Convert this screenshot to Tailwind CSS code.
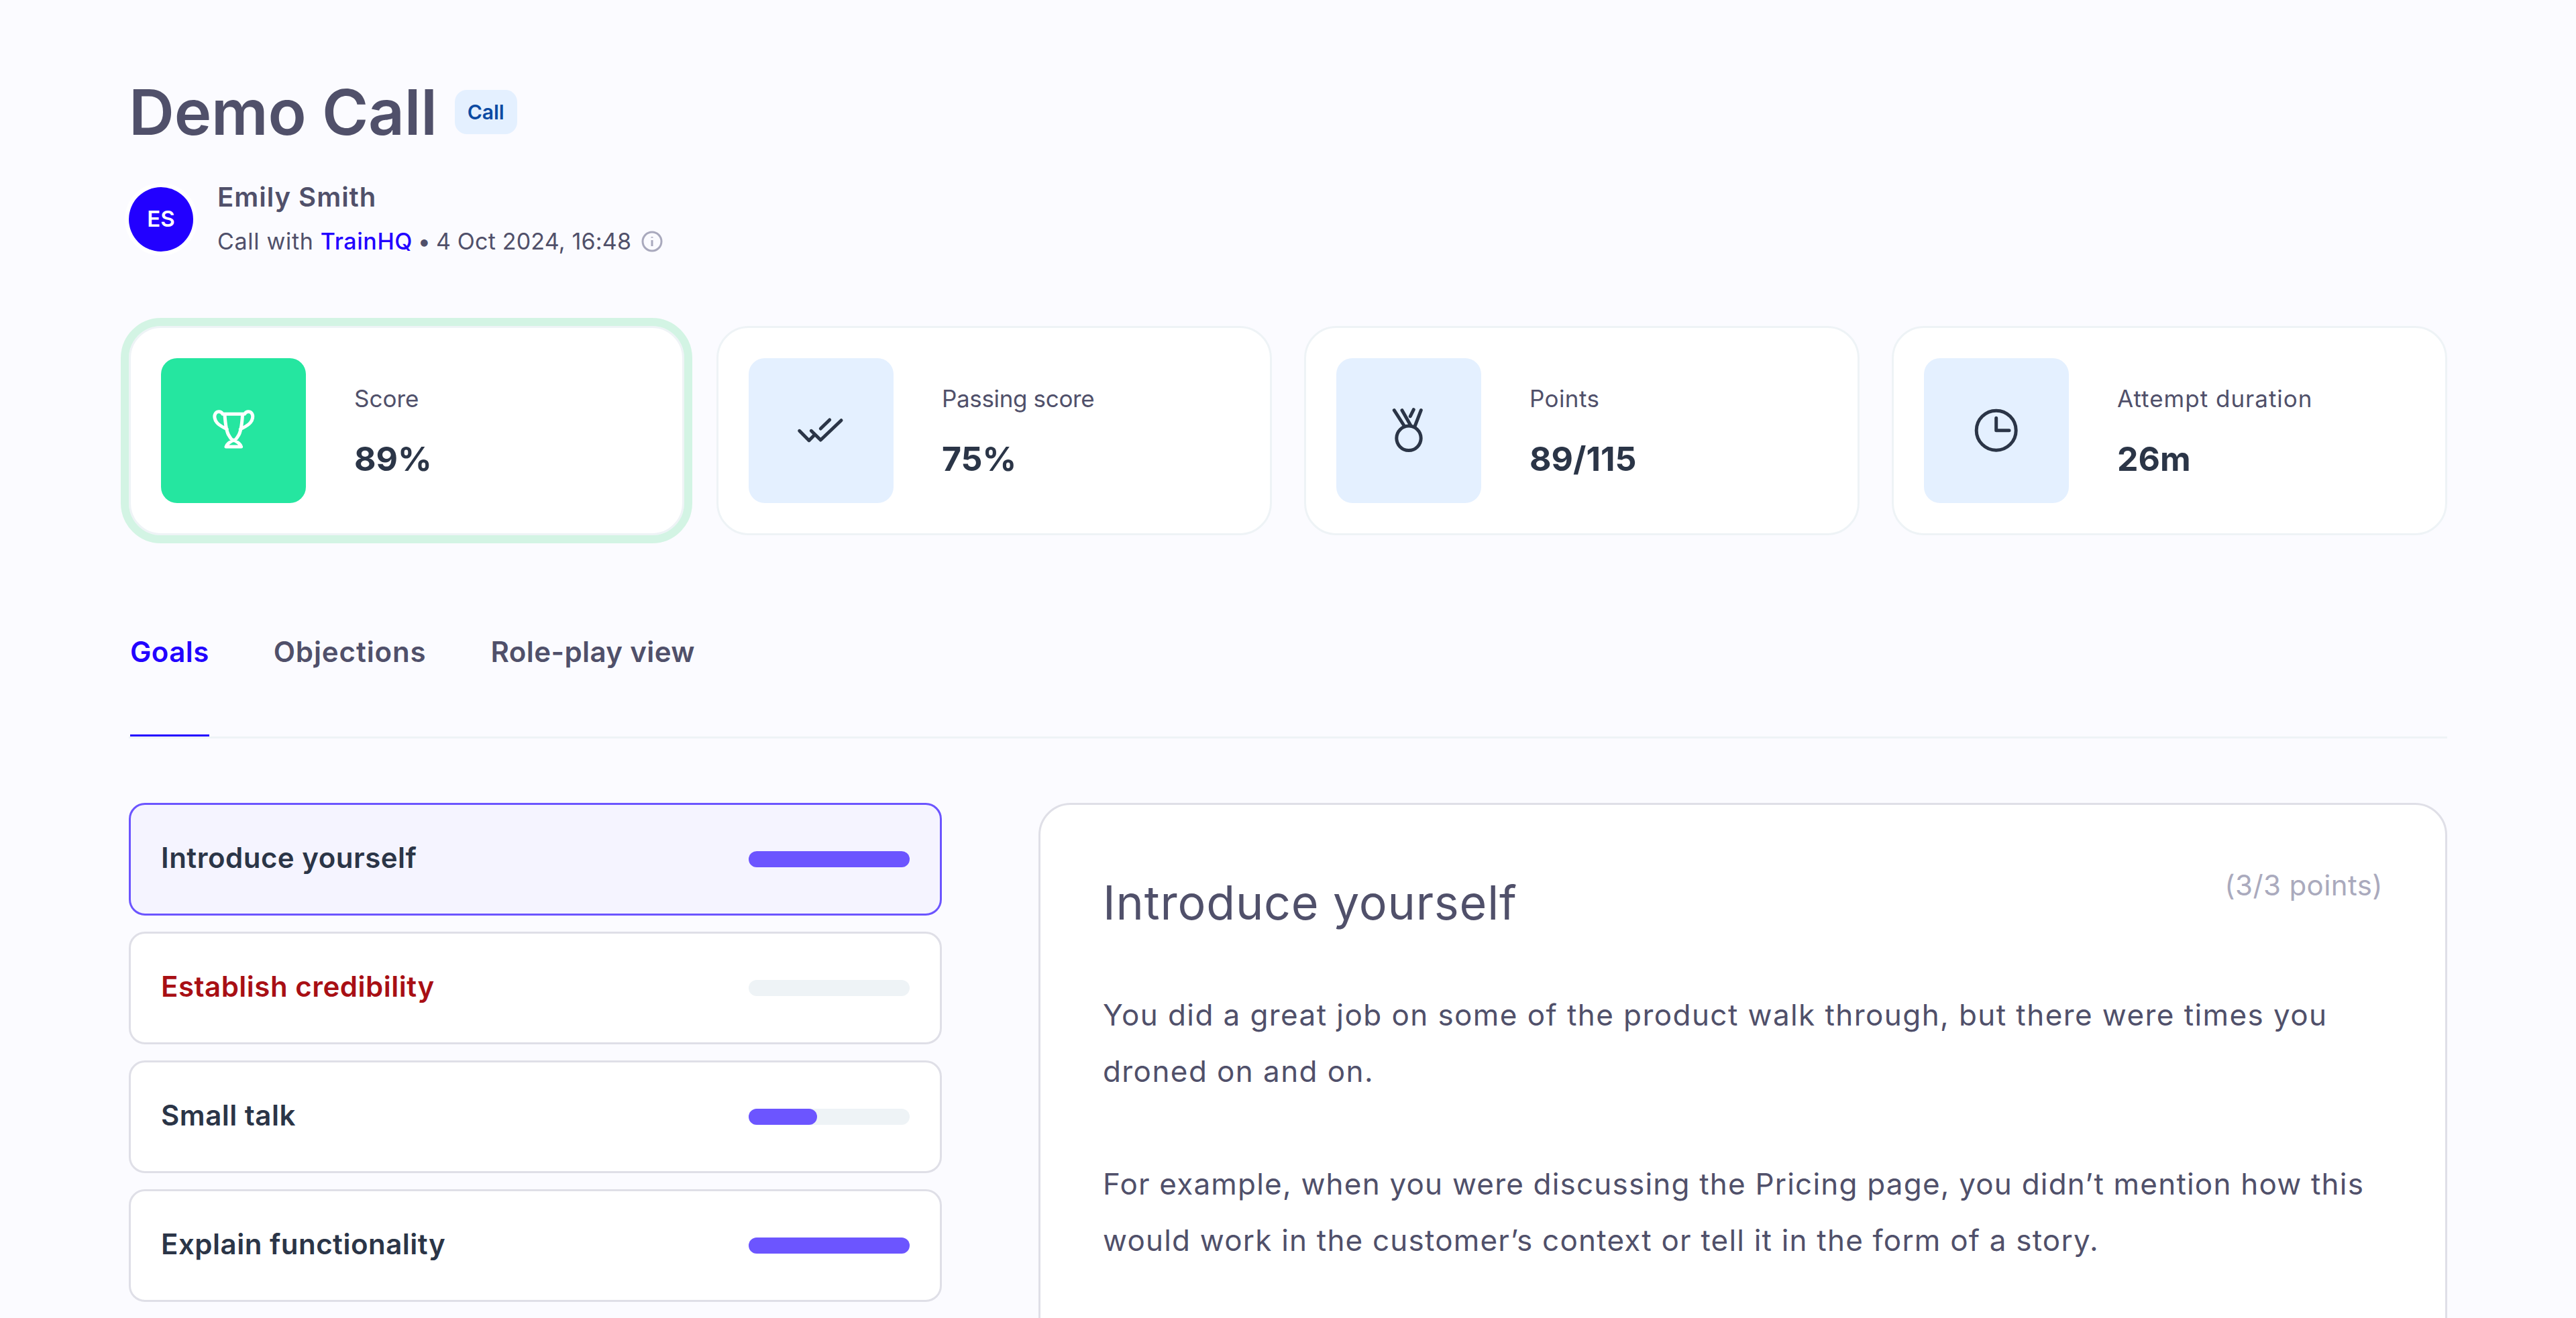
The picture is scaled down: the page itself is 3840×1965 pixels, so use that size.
<!doctype html>
<html>
<head>
<meta charset="utf-8">
<script src="https://cdn.jsdelivr.net/npm/@tailwindcss/browser@4"></script>
</head>
<body class="bg-[#fbfbff] font-['Inter',sans-serif] text-[#50506a]">
<div class="h-[1965px] overflow-hidden px-[192px]">
  <div class="flex items-center gap-[26px] pt-[113px]">
    <h1 class="text-[94px] leading-[108px] font-semibold tracking-[-0.2px]">Demo Call</h1>
    <span class="flex h-[66px] w-[93px] items-center justify-center rounded-[18px] bg-[#e4f0ff] text-[30px] font-semibold text-[#0b4aa2]">Call</span>
  </div>
  <div class="mt-[43px] flex items-center gap-[36px]">
    <div class="flex size-[96px] items-center justify-center rounded-full bg-[#2200ff] text-[33px] font-semibold text-white ring-[6px] ring-white">ES</div>
    <div>
      <p class="text-[40px] leading-[60px] font-semibold tracking-[1px]">Emily Smith</p>
      <p class="mt-[6px] flex items-center gap-[15px] text-[34px] leading-[60px] tracking-[0.2px]"><span><span class="tracking-[0.7px]">Call with </span><span class="font-medium tracking-[0.6px] text-[#2200ff]">TrainHQ</span><span class="-mx-[2px]"> • </span>4 Oct 2024, 16:48</span>
        <svg class="size-[32px]" viewBox="0 0 32 32" fill="none" stroke="#a9a9bd" stroke-width="3"><circle cx="16" cy="16" r="14"/><path d="M16 14v9M16 9v1.500"/></svg>
      </p>
    </div>
  </div>
  <div class="mt-[96px] grid grid-cols-4 gap-[48px]">
    <div class="flex h-[312px] items-center gap-[72px] rounded-[48px] border-[3px] border-[#eef3f6] bg-white pl-[45px] outline-[12px] outline-[#d3f4e4]">
      <div class="flex size-[216px] items-center justify-center rounded-[24px] bg-[#25e6a0]">
        <svg class="size-[72px]" viewBox="0 0 72 72" fill="none" stroke="#fff" stroke-width="5" stroke-linecap="round" stroke-linejoin="round"><path d="M20 11.300H52.500M23 12C24 28 26 39 29.700 44C32 48 34 50.700 36.300 50.700C38.600 50.700 40.600 48 43 44C46.700 39 48.600 28 49.600 12M19.700 10.700C17 7 12 7 9.500 10C6.500 14 8 20 11.300 24C15 28.500 21 31 26.300 34M52.900 10.700C55.600 7 60.600 7 63.100 10C66.100 14 64.600 20 61.300 24C57.600 28.500 51.600 31 46.300 34M36.300 50C31 52.500 26 56 25 60H47.600C46.600 56 41.600 52.500 36.300 50Z"/></svg>
      </div>
      <div class="pt-[3px]"><p class="text-[35px] leading-[60px]">Score</p><p class="mt-[21px] text-[50px] leading-[78px] font-bold text-[#2b3547]">89%</p></div>
    </div>
    <div class="flex h-[312px] items-center gap-[72px] rounded-[48px] border-[3px] border-[#eef3f6] bg-white pl-[45px]">
      <div class="flex size-[216px] items-center justify-center rounded-[24px] bg-[#e4f0ff]">
        <svg class="size-[72px]" viewBox="0 0 72 72" fill="none" stroke="#2b3547" stroke-width="5" stroke-linecap="round" stroke-linejoin="round"><path d="M3.700 36.300L18 50.700L26.300 42.300M21.300 36.300L35.300 50L66 20.700M35.300 33L48.700 20"/></svg>
      </div>
      <div class="pt-[3px]"><p class="text-[35px] leading-[60px] tracking-[-0.35px]">Passing score</p><p class="mt-[21px] text-[50px] leading-[78px] font-bold text-[#2b3547]">75%</p></div>
    </div>
    <div class="flex h-[312px] items-center gap-[72px] rounded-[48px] border-[3px] border-[#eef3f6] bg-white pl-[45px]">
      <div class="flex size-[216px] items-center justify-center rounded-[24px] bg-[#e4f0ff]">
        <svg class="size-[72px]" viewBox="0 0 72 72" fill="none" stroke="#2b3547" stroke-width="5" stroke-linecap="round" stroke-linejoin="round"><circle cx="36" cy="47.300" r="18.200"/><path d="M14.300 5.700L29.300 29M26 5.700L39.300 29M54.300 5.700L45.300 29M43.300 4.700L38.300 14.700"/></svg>
      </div>
      <div class="pt-[3px]"><p class="text-[35px] leading-[60px] tracking-[0.4px]">Points</p><p class="mt-[21px] text-[50px] leading-[78px] font-bold text-[#2b3547]">89/115</p></div>
    </div>
    <div class="flex h-[312px] items-center gap-[72px] rounded-[48px] border-[3px] border-[#eef3f6] bg-white pl-[45px]">
      <div class="flex size-[216px] items-center justify-center rounded-[24px] bg-[#e4f0ff]">
        <svg class="size-[72px]" viewBox="0 0 72 72" fill="none" stroke="#2b3547" stroke-width="5" stroke-linecap="round" stroke-linejoin="round"><circle cx="35.700" cy="35.700" r="29.500"/><path d="M35.700 17.300V35.700H55"/></svg>
      </div>
      <div class="pt-[3px]"><p class="text-[35px] leading-[60px] tracking-[1px]">Attempt duration</p><p class="mt-[21px] text-[50px] leading-[78px] font-bold text-[#2b3547]">26m</p></div>
    </div>
  </div>
  <div class="mt-[120px] flex gap-[96px] border-b-[3px] border-[#eef3f6] pl-[2px]">
    <a class="h-[180px] border-b-[3px] border-[#2200ff] pt-[24px] text-[42px] leading-[60px] font-semibold tracking-[0.4px] text-[#2200ff]">Goals</a>
    <a class="pt-[24px] text-[42px] leading-[60px] font-semibold tracking-[0.9px]">Objections</a>
    <a class="pt-[24px] text-[42px] leading-[60px] font-semibold tracking-[0.4px]">Role-play view</a>
  </div>
  <div class="mt-[96px] flex gap-[144px]">
    <div class="flex w-[1212px] shrink-0 flex-col gap-[24px]">
      <div class="flex h-[168px] items-center justify-between rounded-[24px] border-[3px] border-[#6c55ff] bg-[#f5f4ff] px-[45px]">
        <span class="pb-[6px] text-[42px] font-semibold tracking-[0.5px] text-[#2b3547]">Introduce yourself</span>
        <div class="h-[24px] w-[240px] rounded-full bg-[#6c55ff]"></div>
      </div>
      <div class="flex h-[168px] items-center justify-between rounded-[24px] border-[3px] border-[#dfdfe7] bg-white px-[45px]">
        <span class="pb-[6px] text-[42px] font-semibold tracking-[0.5px] text-[#a80f14]">Establish credibility</span>
        <div class="h-[24px] w-[240px] rounded-full bg-[#eef3f6]"></div>
      </div>
      <div class="flex h-[168px] items-center justify-between rounded-[24px] border-[3px] border-[#dfdfe7] bg-white px-[45px]">
        <span class="pb-[6px] text-[42px] font-semibold tracking-[0.5px] text-[#2b3547]">Small talk</span>
        <div class="h-[24px] w-[240px] rounded-full bg-[#eef3f6]"><div class="h-[24px] w-[102px] rounded-full bg-[#6c55ff]"></div></div>
      </div>
      <div class="flex h-[168px] items-center justify-between rounded-[24px] border-[3px] border-[#dfdfe7] bg-white px-[45px]">
        <span class="pb-[6px] text-[42px] font-semibold tracking-[0.5px] text-[#2b3547]">Explain functionality</span>
        <div class="h-[24px] w-[240px] rounded-full bg-[#6c55ff]"></div>
      </div>
    </div>
    <div class="h-[900px] flex-1 rounded-[48px] border-[3px] border-[#dfdfe7] bg-white px-[93px] pt-[90px]">
      <div class="flex items-start justify-between">
        <h2 class="mt-[8px] text-[70px] leading-[96px] tracking-[0.8px]">Introduce yourself</h2>
        <span class="text-[42px] leading-[60px] tracking-[0.4px] text-[#aaaabd]">(3/3 points)</span>
      </div>
      <div class="mt-[77px] text-[44px] leading-[84px]">
        <p class="whitespace-nowrap tracking-[1.42px]">You did a great job on some of the product walk through, but there were times you<br>droned on and on.</p>
        <p class="mt-[84px] whitespace-nowrap tracking-[1.2px]">For example, when you were discussing the Pricing page, you didn’t mention how this<br>would work in the customer’s context or tell it in the form of a story.</p>
      </div>
    </div>
  </div>
</div>
</body>
</html>
